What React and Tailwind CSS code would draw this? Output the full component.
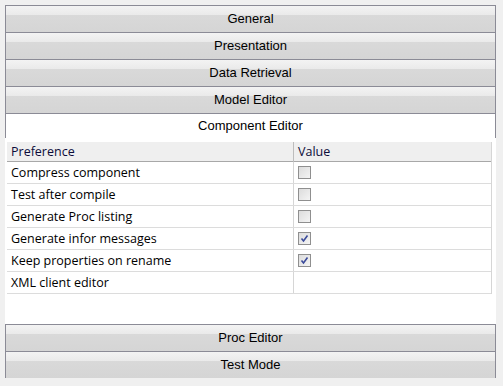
const sections = ["General", "Presentation", "Data Retrieval", "Model Editor"];

const prefs = [
  { name: "Compress component", value: false },
  { name: "Test after compile", value: false },
  { name: "Generate Proc listing", value: false },
  { name: "Generate infor messages", value: true },
  { name: "Keep properties on rename", value: true },
  { name: "XML client editor", value: null },
];

const HeaderBar = ({ title }) => (
  <div className="h-[27px] border-t border-x border-[#8b8b96] bg-[linear-gradient(to_bottom,#f3f3f3_0%,#eaeaea_34%,#d9d9d9_35%,#d5d5d5_100%)] flex items-center justify-center text-[13px] text-black">
    {title}
  </div>
);

const CheckBox = ({ checked }) => (
  <div className="w-[13px] h-[13px] border border-[#8f8f8f] bg-[linear-gradient(135deg,#dcdcdc_0%,#f4f4f4_100%)] flex items-center justify-center">
    {checked && (
      <svg width="9" height="9" viewBox="0 0 9 9">
        <path d="M1.5 4.5 L3.5 7 L7.5 1.5" stroke="#3a4a9a" strokeWidth="1.6" fill="none" />
      </svg>
    )}
  </div>
);

export default function App() {
  return (
    <div
      className="w-[503px] h-[386px] bg-[#f0f0f0] pt-[5px] pl-[5px] overflow-hidden"
      style={{ fontFamily: '"Liberation Sans", Arial, sans-serif' }}
    >
      <div className="w-[491px]">
        {sections.map((s) => (
          <HeaderBar key={s} title={s} />
        ))}
        <div className="h-[25px] border-t border-x border-[#8b8b96] bg-white flex items-center justify-center text-[13px] text-black">
          Component Editor
        </div>
        <div className="h-[186px] bg-white pl-[2px] pt-[4px]">
          <div
            className="w-[485px] border-r border-[#d6d6d6] text-[12.5px] text-black"
            style={{ fontFamily: '"Open Sans", "Noto Sans", sans-serif' }}
          >
            <div className="grid grid-cols-[287px_1fr] h-[20px] bg-[#efefef] border-b border-[#a8a8a8]">
              <div className="pl-[4px] pt-px flex items-center border-r border-[#bdbdbd] text-[#0c0c3a]">Preference</div>
              <div className="pl-[4px] pt-px flex items-center text-[#0c0c3a]">Value</div>
            </div>
            {prefs.map((p) => (
              <div key={p.name} className="grid grid-cols-[287px_1fr] h-[22px] border-b border-[#dcdcdc]">
                <div className="pl-[4px] pt-px flex items-center border-r border-[#d6d6d6]">{p.name}</div>
                <div className="pl-[4px] flex items-center">
                  {p.value !== null && <CheckBox checked={p.value} />}
                </div>
              </div>
            ))}
          </div>
        </div>
        <HeaderBar title="Proc Editor" />
        <HeaderBar title="Test Mode" />
      </div>
    </div>
  );
}
